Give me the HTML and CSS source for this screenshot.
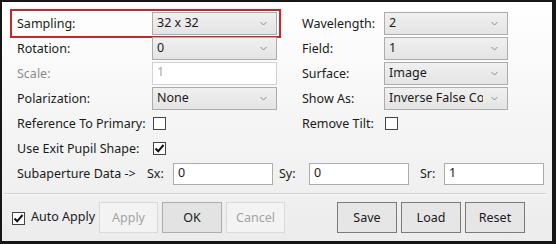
FILE: index.html
```html
<!DOCTYPE html>
<html>
<head>
<meta charset="utf-8">
<link rel="stylesheet" href="styles.css">
</head>
<body>
<div class="window">
  <div class="grid">
    <div class="cell highlighted">
      <span class="label">Sampling:</span>
      <div class="select"><span>32 x 32</span><svg class="chev" width="7" height="5" viewBox="0 0 7 5"><polyline points="0.5,1 3.5,4 6.5,1" fill="none" stroke="#8a8a8a" stroke-width="1"/></svg></div>
    </div>
    <div class="cell right">
      <span class="label">Wavelength:</span>
      <div class="select"><span>2</span><svg class="chev" width="7" height="5" viewBox="0 0 7 5"><polyline points="0.5,1 3.5,4 6.5,1" fill="none" stroke="#8a8a8a" stroke-width="1"/></svg></div>
    </div>

    <div class="cell">
      <span class="label">Rotation:</span>
      <div class="select"><span>0</span><svg class="chev" width="7" height="5" viewBox="0 0 7 5"><polyline points="0.5,1 3.5,4 6.5,1" fill="none" stroke="#8a8a8a" stroke-width="1"/></svg></div>
    </div>
    <div class="cell right">
      <span class="label">Field:</span>
      <div class="select"><span>1</span><svg class="chev" width="7" height="5" viewBox="0 0 7 5"><polyline points="0.5,1 3.5,4 6.5,1" fill="none" stroke="#8a8a8a" stroke-width="1"/></svg></div>
    </div>

    <div class="cell">
      <span class="label disabled">Scale:</span>
      <div class="textbox disabled-box"><span>1</span></div>
    </div>
    <div class="cell right">
      <span class="label">Surface:</span>
      <div class="select"><span>Image</span><svg class="chev" width="7" height="5" viewBox="0 0 7 5"><polyline points="0.5,1 3.5,4 6.5,1" fill="none" stroke="#8a8a8a" stroke-width="1"/></svg></div>
    </div>

    <div class="cell">
      <span class="label">Polarization:</span>
      <div class="select"><span>None</span><svg class="chev" width="7" height="5" viewBox="0 0 7 5"><polyline points="0.5,1 3.5,4 6.5,1" fill="none" stroke="#8a8a8a" stroke-width="1"/></svg></div>
    </div>
    <div class="cell right">
      <span class="label">Show As:</span>
      <div class="select"><span class="clip">Inverse False Color</span><svg class="chev" width="7" height="5" viewBox="0 0 7 5"><polyline points="0.5,1 3.5,4 6.5,1" fill="none" stroke="#8a8a8a" stroke-width="1"/></svg></div>
    </div>

    <div class="cell">
      <span class="label">Reference To Primary:</span>
      <span class="check"></span>
    </div>
    <div class="cell right">
      <span class="label">Remove Tilt:</span>
      <span class="check"></span>
    </div>

    <div class="cell">
      <span class="label">Use Exit Pupil Shape:</span>
      <span class="check"><svg width="11" height="11" viewBox="0 0 11 11"><polyline points="1.5,5.5 4.2,8.3 9.5,2" fill="none" stroke="#111" stroke-width="2"/></svg></span>
    </div>
    <div class="cell right"></div>
  </div>

  <div class="subrow">
    <span class="sublabel">Subaperture Data -&gt;</span>
    <span class="slabel sx">Sx:</span>
    <div class="textbox small"><span>0</span></div>
    <span class="slabel sy">Sy:</span>
    <div class="textbox small"><span>0</span></div>
    <span class="slabel sr">Sr:</span>
    <div class="textbox small"><span>1</span></div>
  </div>

  <div class="separator"></div>

  <div class="buttons">
    <label class="auto"><span class="check"><svg width="11" height="11" viewBox="0 0 11 11"><polyline points="1.5,5.5 4.2,8.3 9.5,2" fill="none" stroke="#111" stroke-width="2"/></svg></span><span class="autotext">Auto Apply</span></label>
    <div class="btn dis apply">Apply</div>
    <div class="btn ok">OK</div>
    <div class="btn dis">Cancel</div>
    <div class="spacer"></div>
    <div class="btn main">Save</div>
    <div class="btn main">Load</div>
    <div class="btn main">Reset</div>
  </div>
</div>
</body>
</html>
```

FILE: styles.css
```css
* { box-sizing: border-box; }
html, body { margin: 0; padding: 0; background: #ffffff; }
body {
  width: 556px;
  height: 244px;
  font-family: "Noto Sans", "Open Sans", sans-serif;
  font-size: 12.5px;
  color: #1a1a1a;
  overflow: hidden;
}
.window {
  width: 556px;
  height: 244px;
  border-top: 2px solid #161616;
  border-left: 2px solid #161616;
  border-right: 4px solid #161616;
  border-bottom: 3px solid #161616;
  background: linear-gradient(#ffffff 0%, #f6f6f6 45%, #ececec 100%);
  padding: 10px 0 0 11px;
}
.grid {
  display: grid;
  grid-template-columns: 265px 206px;
  column-gap: 24px;
  grid-auto-rows: 23px;
  row-gap: 2px;
}
.cell {
  display: flex;
  align-items: center;
  height: 23px;
}
.label {
  width: 139px;
  padding-left: 4px;
  white-space: nowrap;
  line-height: 23px;
  padding-bottom: 1px;
}
.right .label { width: 82px; padding-left: 0; }
.label.disabled { color: #8d8d8d; }
.highlighted {
  outline: 2px solid #c8262b;
  outline-offset: 1px;
}
.select {
  width: 125px;
  height: 23px;
  border: 1px solid #acacac;
  background: linear-gradient(#f0f0f0, #e4e4e4);
  display: flex;
  align-items: center;
  padding: 0 0 2px 4px;
}
.right .select { width: 124px; }
.select span { flex: 1; white-space: nowrap; overflow: hidden; }
.select .clip { max-width: 94px; flex: none; margin-right: auto; }
.chev { margin: 2px 9px 0 6px; flex: none; }
.textbox {
  width: 125px;
  height: 23px;
  background: #ffffff;
  border: 1px solid #acacac;
  padding: 0 0 0 4px;
  line-height: 18px;
}
.disabled-box { border-color: #d2d2d2; color: #a6a6a6; }
.check {
  width: 13px;
  height: 13px;
  border: 1px solid #444;
  background: #ffffff;
  display: inline-flex;
  align-items: center;
  justify-content: center;
  margin-left: 1px;
  flex: none;
}
.subrow {
  display: flex;
  align-items: center;
  height: 23px;
  margin-top: 2px;
}
.sublabel { width: 134px; padding-left: 4px; white-space: nowrap; padding-bottom: 1px; }
.slabel { white-space: nowrap; padding-bottom: 1px; }
.sx { width: 26px; }
.sy { width: 30px; margin-left: 6px; }
.sr { width: 24px; margin-left: 11px; }
.textbox.small { width: 100px; height: 22px; }
.separator {
  height: 2px;
  border-top: 1px solid #cfcfcf;
  border-bottom: 1px solid #fafafa;
  margin: 8px 6px 0 -9px;
}
.buttons {
  display: flex;
  align-items: center;
  gap: 4px;
  margin-top: 7px;
  width: 512px;
}
.auto {
  display: flex;
  align-items: center;
  width: 83px;
  height: 31px;
  margin-left: -1px;
}
.auto .check { margin: 2px 0 0 0; }
.autotext { margin-left: 6px; white-space: nowrap; padding-bottom: 2px; }
.btn {
  width: 59px;
  height: 31px;
  display: flex;
  align-items: center;
  justify-content: center;
  border: 1px solid #adadad;
  background: #e3e3e3;
  padding-bottom: 1px;
  flex: none;
}
.btn.dis { background: #f3f3f3; border-color: #dadada; color: #a3a3a3; }
.btn.ok { width: 60px; }
.btn.main { background: #e6e6e6; border-color: #7a7a7a; width: 60px; }
.spacer { flex: 1; }
```
